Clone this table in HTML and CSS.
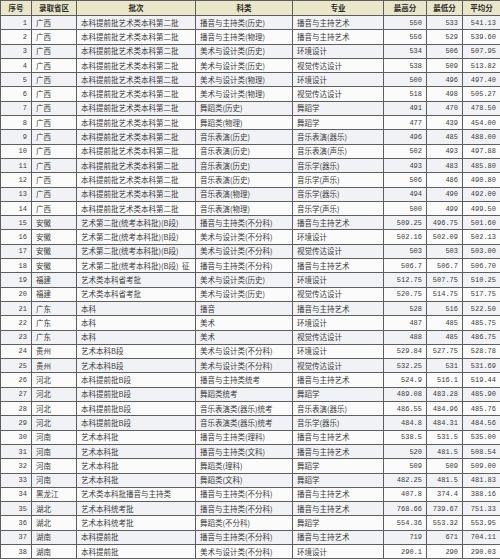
FILE: index.html
```html
<!DOCTYPE html>
<html lang="zh">
<head>
<meta charset="utf-8">
<link rel="stylesheet" href="styles.css">
</head>
<body>
<table class="score-table">
<colgroup>
<col class="c-no"><col class="c-prov"><col class="c-batch"><col class="c-type"><col class="c-major"><col class="c-max"><col class="c-min"><col class="c-avg">
</colgroup>
<thead>
<tr><th>序号</th><th>录取省区</th><th>批次</th><th>科类</th><th>专业</th><th>最高分</th><th>最低分</th><th>平均分</th></tr>
</thead>
<tbody>
<tr><td class="num">1</td><td>广西</td><td>本科提前批艺术类本科第二批</td><td>播音与主持类(历史)</td><td>播音与主持艺术</td><td class="num">550</td><td class="num">533</td><td class="num">541.13</td></tr>
<tr><td class="num">2</td><td>广西</td><td>本科提前批艺术类本科第二批</td><td>播音与主持类(物理)</td><td>播音与主持艺术</td><td class="num">556</td><td class="num">529</td><td class="num">539.60</td></tr>
<tr><td class="num">3</td><td>广西</td><td>本科提前批艺术类本科第二批</td><td>美术与设计类(历史)</td><td>环境设计</td><td class="num">534</td><td class="num">506</td><td class="num">507.95</td></tr>
<tr><td class="num">4</td><td>广西</td><td>本科提前批艺术类本科第二批</td><td>美术与设计类(历史)</td><td>视觉传达设计</td><td class="num">538</td><td class="num">509</td><td class="num">513.82</td></tr>
<tr><td class="num">5</td><td>广西</td><td>本科提前批艺术类本科第二批</td><td>美术与设计类(物理)</td><td>环境设计</td><td class="num">500</td><td class="num">496</td><td class="num">497.40</td></tr>
<tr><td class="num">6</td><td>广西</td><td>本科提前批艺术类本科第二批</td><td>美术与设计类(物理)</td><td>视觉传达设计</td><td class="num">518</td><td class="num">498</td><td class="num">505.27</td></tr>
<tr><td class="num">7</td><td>广西</td><td>本科提前批艺术类本科第二批</td><td>舞蹈类(历史)</td><td>舞蹈学</td><td class="num">491</td><td class="num">470</td><td class="num">478.50</td></tr>
<tr><td class="num">8</td><td>广西</td><td>本科提前批艺术类本科第二批</td><td>舞蹈类(物理)</td><td>舞蹈学</td><td class="num">477</td><td class="num">439</td><td class="num">454.00</td></tr>
<tr><td class="num">9</td><td>广西</td><td>本科提前批艺术类本科第二批</td><td>音乐表演(历史)</td><td>音乐表演(器乐)</td><td class="num">496</td><td class="num">485</td><td class="num">488.00</td></tr>
<tr><td class="num">10</td><td>广西</td><td>本科提前批艺术类本科第二批</td><td>音乐表演(历史)</td><td>音乐表演(声乐)</td><td class="num">502</td><td class="num">493</td><td class="num">497.88</td></tr>
<tr><td class="num">11</td><td>广西</td><td>本科提前批艺术类本科第二批</td><td>音乐表演(历史)</td><td>音乐学(器乐)</td><td class="num">493</td><td class="num">483</td><td class="num">485.80</td></tr>
<tr><td class="num">12</td><td>广西</td><td>本科提前批艺术类本科第二批</td><td>音乐表演(历史)</td><td>音乐学(声乐)</td><td class="num">506</td><td class="num">486</td><td class="num">490.80</td></tr>
<tr><td class="num">13</td><td>广西</td><td>本科提前批艺术类本科第二批</td><td>音乐表演(物理)</td><td>音乐学(器乐)</td><td class="num">494</td><td class="num">490</td><td class="num">492.00</td></tr>
<tr><td class="num">14</td><td>广西</td><td>本科提前批艺术类本科第二批</td><td>音乐表演(物理)</td><td>音乐学(声乐)</td><td class="num">500</td><td class="num">499</td><td class="num">499.50</td></tr>
<tr><td class="num">15</td><td>安徽</td><td>艺术第二批(统考本科批)(B段)</td><td>播音与主持类(不分科)</td><td>播音与主持艺术</td><td class="num">509.25</td><td class="num">496.75</td><td class="num">501.60</td></tr>
<tr><td class="num">16</td><td>安徽</td><td>艺术第二批(统考本科批)(B段)</td><td>美术与设计类(不分科)</td><td>环境设计</td><td class="num">502.16</td><td class="num">502.09</td><td class="num">502.13</td></tr>
<tr><td class="num">17</td><td>安徽</td><td>艺术第二批(统考本科批)(B段)</td><td>美术与设计类(不分科)</td><td>视觉传达设计</td><td class="num">503</td><td class="num">503</td><td class="num">503.00</td></tr>
<tr><td class="num">18</td><td>安徽</td><td>艺术第二批(统考本科批)(B段)&nbsp;&nbsp;征</td><td>播音与主持类(不分科)</td><td>播音与主持艺术</td><td class="num">506.7</td><td class="num">506.7</td><td class="num">506.70</td></tr>
<tr><td class="num">19</td><td>福建</td><td>艺术类本科省考批</td><td>美术与设计类(历史)</td><td>环境设计</td><td class="num">512.75</td><td class="num">507.75</td><td class="num">510.25</td></tr>
<tr><td class="num">20</td><td>福建</td><td>艺术类本科省考批</td><td>美术与设计类(历史)</td><td>视觉传达设计</td><td class="num">520.75</td><td class="num">514.75</td><td class="num">517.75</td></tr>
<tr><td class="num">21</td><td>广东</td><td>本科</td><td>播音</td><td>播音与主持艺术</td><td class="num">528</td><td class="num">516</td><td class="num">522.50</td></tr>
<tr><td class="num">22</td><td>广东</td><td>本科</td><td>美术</td><td>环境设计</td><td class="num">487</td><td class="num">485</td><td class="num">485.75</td></tr>
<tr><td class="num">23</td><td>广东</td><td>本科</td><td>美术</td><td>视觉传达设计</td><td class="num">488</td><td class="num">485</td><td class="num">486.75</td></tr>
<tr><td class="num">24</td><td>贵州</td><td>艺术本科B段</td><td>美术与设计类(不分科)</td><td>环境设计</td><td class="num">529.84</td><td class="num">527.75</td><td class="num">528.78</td></tr>
<tr><td class="num">25</td><td>贵州</td><td>艺术本科B段</td><td>美术与设计类(不分科)</td><td>视觉传达设计</td><td class="num">532.25</td><td class="num">531</td><td class="num">531.69</td></tr>
<tr><td class="num">26</td><td>河北</td><td>本科提前批B段</td><td>播音与主持类统考</td><td>播音与主持艺术</td><td class="num">524.9</td><td class="num">516.1</td><td class="num">519.44</td></tr>
<tr><td class="num">27</td><td>河北</td><td>本科提前批B段</td><td>舞蹈类统考</td><td>舞蹈学</td><td class="num">489.08</td><td class="num">483.28</td><td class="num">485.90</td></tr>
<tr><td class="num">28</td><td>河北</td><td>本科提前批B段</td><td>音乐表演类(器乐)统考</td><td>音乐表演(器乐)</td><td class="num">486.55</td><td class="num">484.96</td><td class="num">485.76</td></tr>
<tr><td class="num">29</td><td>河北</td><td>本科提前批B段</td><td>音乐表演类(器乐)统考</td><td>音乐学(器乐)</td><td class="num">484.8</td><td class="num">484.31</td><td class="num">484.56</td></tr>
<tr><td class="num">30</td><td>河南</td><td>艺术本科批</td><td>播音与主持类(理科)</td><td>播音与主持艺术</td><td class="num">538.5</td><td class="num">531.5</td><td class="num">535.00</td></tr>
<tr><td class="num">31</td><td>河南</td><td>艺术本科批</td><td>播音与主持类(文科)</td><td>播音与主持艺术</td><td class="num">520</td><td class="num">481.5</td><td class="num">508.54</td></tr>
<tr><td class="num">32</td><td>河南</td><td>艺术本科批</td><td>舞蹈类(理科)</td><td>舞蹈学</td><td class="num">509</td><td class="num">509</td><td class="num">509.00</td></tr>
<tr><td class="num">33</td><td>河南</td><td>艺术本科批</td><td>舞蹈类(文科)</td><td>舞蹈学</td><td class="num">482.25</td><td class="num">481.5</td><td class="num">481.83</td></tr>
<tr><td class="num">34</td><td>黑龙江</td><td>艺术类本科批播音与主持类</td><td>播音与主持类(不分科)</td><td>播音与主持艺术</td><td class="num">407.8</td><td class="num">374.4</td><td class="num">388.16</td></tr>
<tr><td class="num">35</td><td>湖北</td><td>艺术本科统考批</td><td>播音与主持类(不分科)</td><td>播音与主持艺术</td><td class="num">768.66</td><td class="num">739.67</td><td class="num">751.33</td></tr>
<tr><td class="num">36</td><td>湖北</td><td>艺术本科统考批</td><td>舞蹈类(不分科)</td><td>舞蹈学</td><td class="num">554.36</td><td class="num">553.32</td><td class="num">553.95</td></tr>
<tr><td class="num">37</td><td>湖南</td><td>本科提前批</td><td>播音与主持类(不分科)</td><td>播音与主持艺术</td><td class="num">719</td><td class="num">671</td><td class="num">704.11</td></tr>
<tr><td class="num">38</td><td>湖南</td><td>本科提前批</td><td>美术与设计类(不分科)</td><td>环境设计</td><td class="num">290.1</td><td class="num">290</td><td class="num">290.03</td></tr>
</tbody>
</table>
</body>
</html>
```

FILE: styles.css
```css
html, body {
  margin: 0;
  padding: 0;
  background: #ffffff;
}

.score-table {
  width: 500px;
  table-layout: fixed;
  border-collapse: collapse;
  font-family: "Noto Sans CJK SC", "Liberation Sans", sans-serif;
  font-size: 7.5px;
  color: #3c3c3c;
}

.c-no { width: 31px; }
.c-prov { width: 45px; }
.c-batch { width: 119px; }
.c-type { width: 97px; }
.c-major { width: 91px; }
.c-max { width: 43px; }
.c-min { width: 36px; }
.c-avg { width: 38px; }

.score-table th,
.score-table td {
  border: 1px solid #5e5e5e;
  padding: 0 4px;
  white-space: nowrap;
  overflow: hidden;
  line-height: 12px;
}

.score-table thead tr {
  height: 15px;
}

.score-table th {
  background: #e9e6c9;
  font-weight: bold;
  text-align: center;
  color: #2b2b2b;
}

.score-table tbody tr {
  height: 14.3px;
}

.score-table tbody tr:nth-child(odd) td {
  background: #f1f2f5;
}

.score-table tbody tr:nth-child(even) td {
  background: #fbfbfb;
}

.score-table td {
  text-align: left;
}

.score-table td.num {
  text-align: right;
  padding-right: 4px;
  font-family: "Liberation Mono", "DejaVu Sans Mono", monospace;
  font-size: 7px;
}
```
